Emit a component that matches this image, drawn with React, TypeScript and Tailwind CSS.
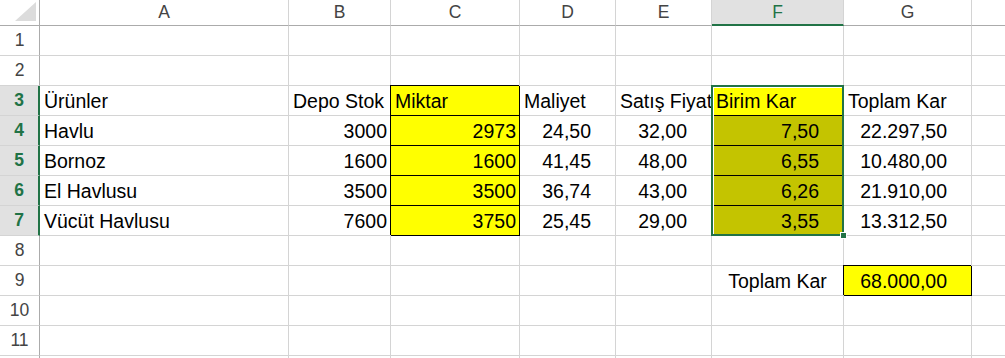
import React from "react";

type Align = "l" | "r" | "rw" | "c";
type Cell = { t: string; al?: Align; fill?: "y" | "o"; box?: boolean; sel?: boolean };

// H is only partly in view; its letter sits past the right edge.
const COLS = ["A", "B", "C", "D", "E", "F", "G", "H"];
const VISIBLE_LETTERS = ["A", "B", "C", "D", "E", "F", "G"];
const ACTIVE_COL = "F";
const ACTIVE_ROWS = [3, 4, 5, 6, 7];
const ROWS = Array.from({ length: 12 }, (_, i) => i + 1);
const LABELLED_ROWS = 11;

const row = (a: string, b: string, c: string, d: string, e: string, f: string, g: string): Record<string, Cell> => ({
  A: { t: a, al: "l" },
  B: { t: b, al: "r" },
  C: { t: c, al: "r", fill: "y", box: true },
  D: { t: d, al: "rw" },
  E: { t: e, al: "rw" },
  F: { t: f, al: "rw", fill: "o", box: true },
  G: { t: g, al: "rw" },
});

const SHEET: Record<number, Record<string, Cell>> = {
  3: {
    A: { t: "Ürünler", al: "l" },
    B: { t: "Depo Stok", al: "l" },
    C: { t: "Miktar", al: "l", fill: "y", box: true },
    D: { t: "Maliyet", al: "l" },
    E: { t: "Satış Fiyat", al: "l" },
    F: { t: "Birim Kar", al: "l", fill: "y", box: true, sel: true },
    G: { t: "Toplam Kar", al: "l" },
  },
  4: row("Havlu", "3000", "2973", "24,50", "32,00", "7,50", "22.297,50"),
  5: row("Bornoz", "1600", "1600", "41,45", "48,00", "6,55", "10.480,00"),
  6: row("El Havlusu", "3500", "3500", "36,74", "43,00", "6,26", "21.910,00"),
  7: row("Vücüt Havlusu", "7600", "3750", "25,45", "29,00", "3,55", "13.312,50"),
  9: {
    F: { t: "Toplam Kar", al: "c" },
    G: { t: "68.000,00", al: "rw", fill: "y", box: true },
  },
};

function alignClass(al?: Align) {
  switch (al) {
    case "r":
      return "justify-end pr-[3px]";
    case "rw":
      return "justify-end pr-[24px]";
    case "c":
      return "justify-center";
    default:
      return "justify-start pl-[4px]";
  }
}

function fillClass(fill?: "y" | "o") {
  if (fill === "y") return "bg-[#ffff00]";
  if (fill === "o") return "bg-[#c4c400]";
  return "bg-white";
}

function SheetCell({ cell }: { cell?: Cell }) {
  const border = cell?.box
    ? "border-r border-b border-black shadow-[-1px_-1px_0_0_#000]"
    : "border-r border-b border-[#d4d4d4]";
  const clip = cell?.sel ? "relative" : "overflow-hidden";
  return (
    <div
      className={`flex items-end pb-[3px] leading-[22px] whitespace-nowrap text-[19.5px] text-black ${border} ${clip} ${fillClass(
        cell?.fill
      )} ${alignClass(cell?.al)}`}
    >
      {cell?.t ?? ""}
      {cell?.sel && (
        <div className="absolute -left-px -top-px w-[133px] h-[151px] border-2 border-[#217346] shadow-[inset_1px_1px_0_0_#fff] z-10">
          <div className="absolute right-[-5px] bottom-[-5px] w-[7px] h-[7px] bg-[#217346] border border-white" />
        </div>
      )}
    </div>
  );
}

export default function App() {
  return (
    <div className="w-[1005px] h-[358px] overflow-hidden bg-white font-['Liberation_Sans',Arial,sans-serif]">
      <div className="grid w-max grid-cols-[40px_249px_102px_129px_96px_96px_132px_128px_96px] grid-rows-[26px_repeat(12,30px)]">
        {/* select-all corner */}
        <div className="border-r border-b border-r-[#ababab] border-b-[#ababab] bg-white">
          <svg width="39" height="25" viewBox="0 0 39 25" className="block">
            <polygon points="15,21 36,21 36,2" fill="#dcdcdc" />
          </svg>
        </div>
        {COLS.map((c) =>
          c === ACTIVE_COL ? (
            <div
              key={c}
              className="flex items-center justify-center border-r border-r-[#d4d4d4] border-b-2 border-b-[#217346] bg-[#e1e1e1] text-[17.5px] text-[#217346]"
            >
              {c}
            </div>
          ) : (
            <div
              key={c}
              className="flex items-center justify-center border-r border-b border-r-[#d4d4d4] border-b-[#ababab] bg-white text-[17.5px] text-[#444444]"
            >
              {VISIBLE_LETTERS.includes(c) ? c : ""}
            </div>
          )
        )}
        {ROWS.map((r) => (
          <React.Fragment key={r}>
            {ACTIVE_ROWS.includes(r) ? (
              <div className="flex items-center justify-center border-r-2 border-b border-r-[#217346] border-b-[#d4d4d4] bg-[#e1e1e1] text-[17.5px] font-bold text-[#217346]">
                {r}
              </div>
            ) : (
              <div className="flex items-center justify-center border-r border-b border-r-[#ababab] border-b-[#d4d4d4] bg-white text-[17.5px] text-[#444444]">
                {r <= LABELLED_ROWS ? r : ""}
              </div>
            )}
            {COLS.map((c) => (
              <SheetCell key={c} cell={SHEET[r]?.[c]} />
            ))}
          </React.Fragment>
        ))}
      </div>
    </div>
  );
}
